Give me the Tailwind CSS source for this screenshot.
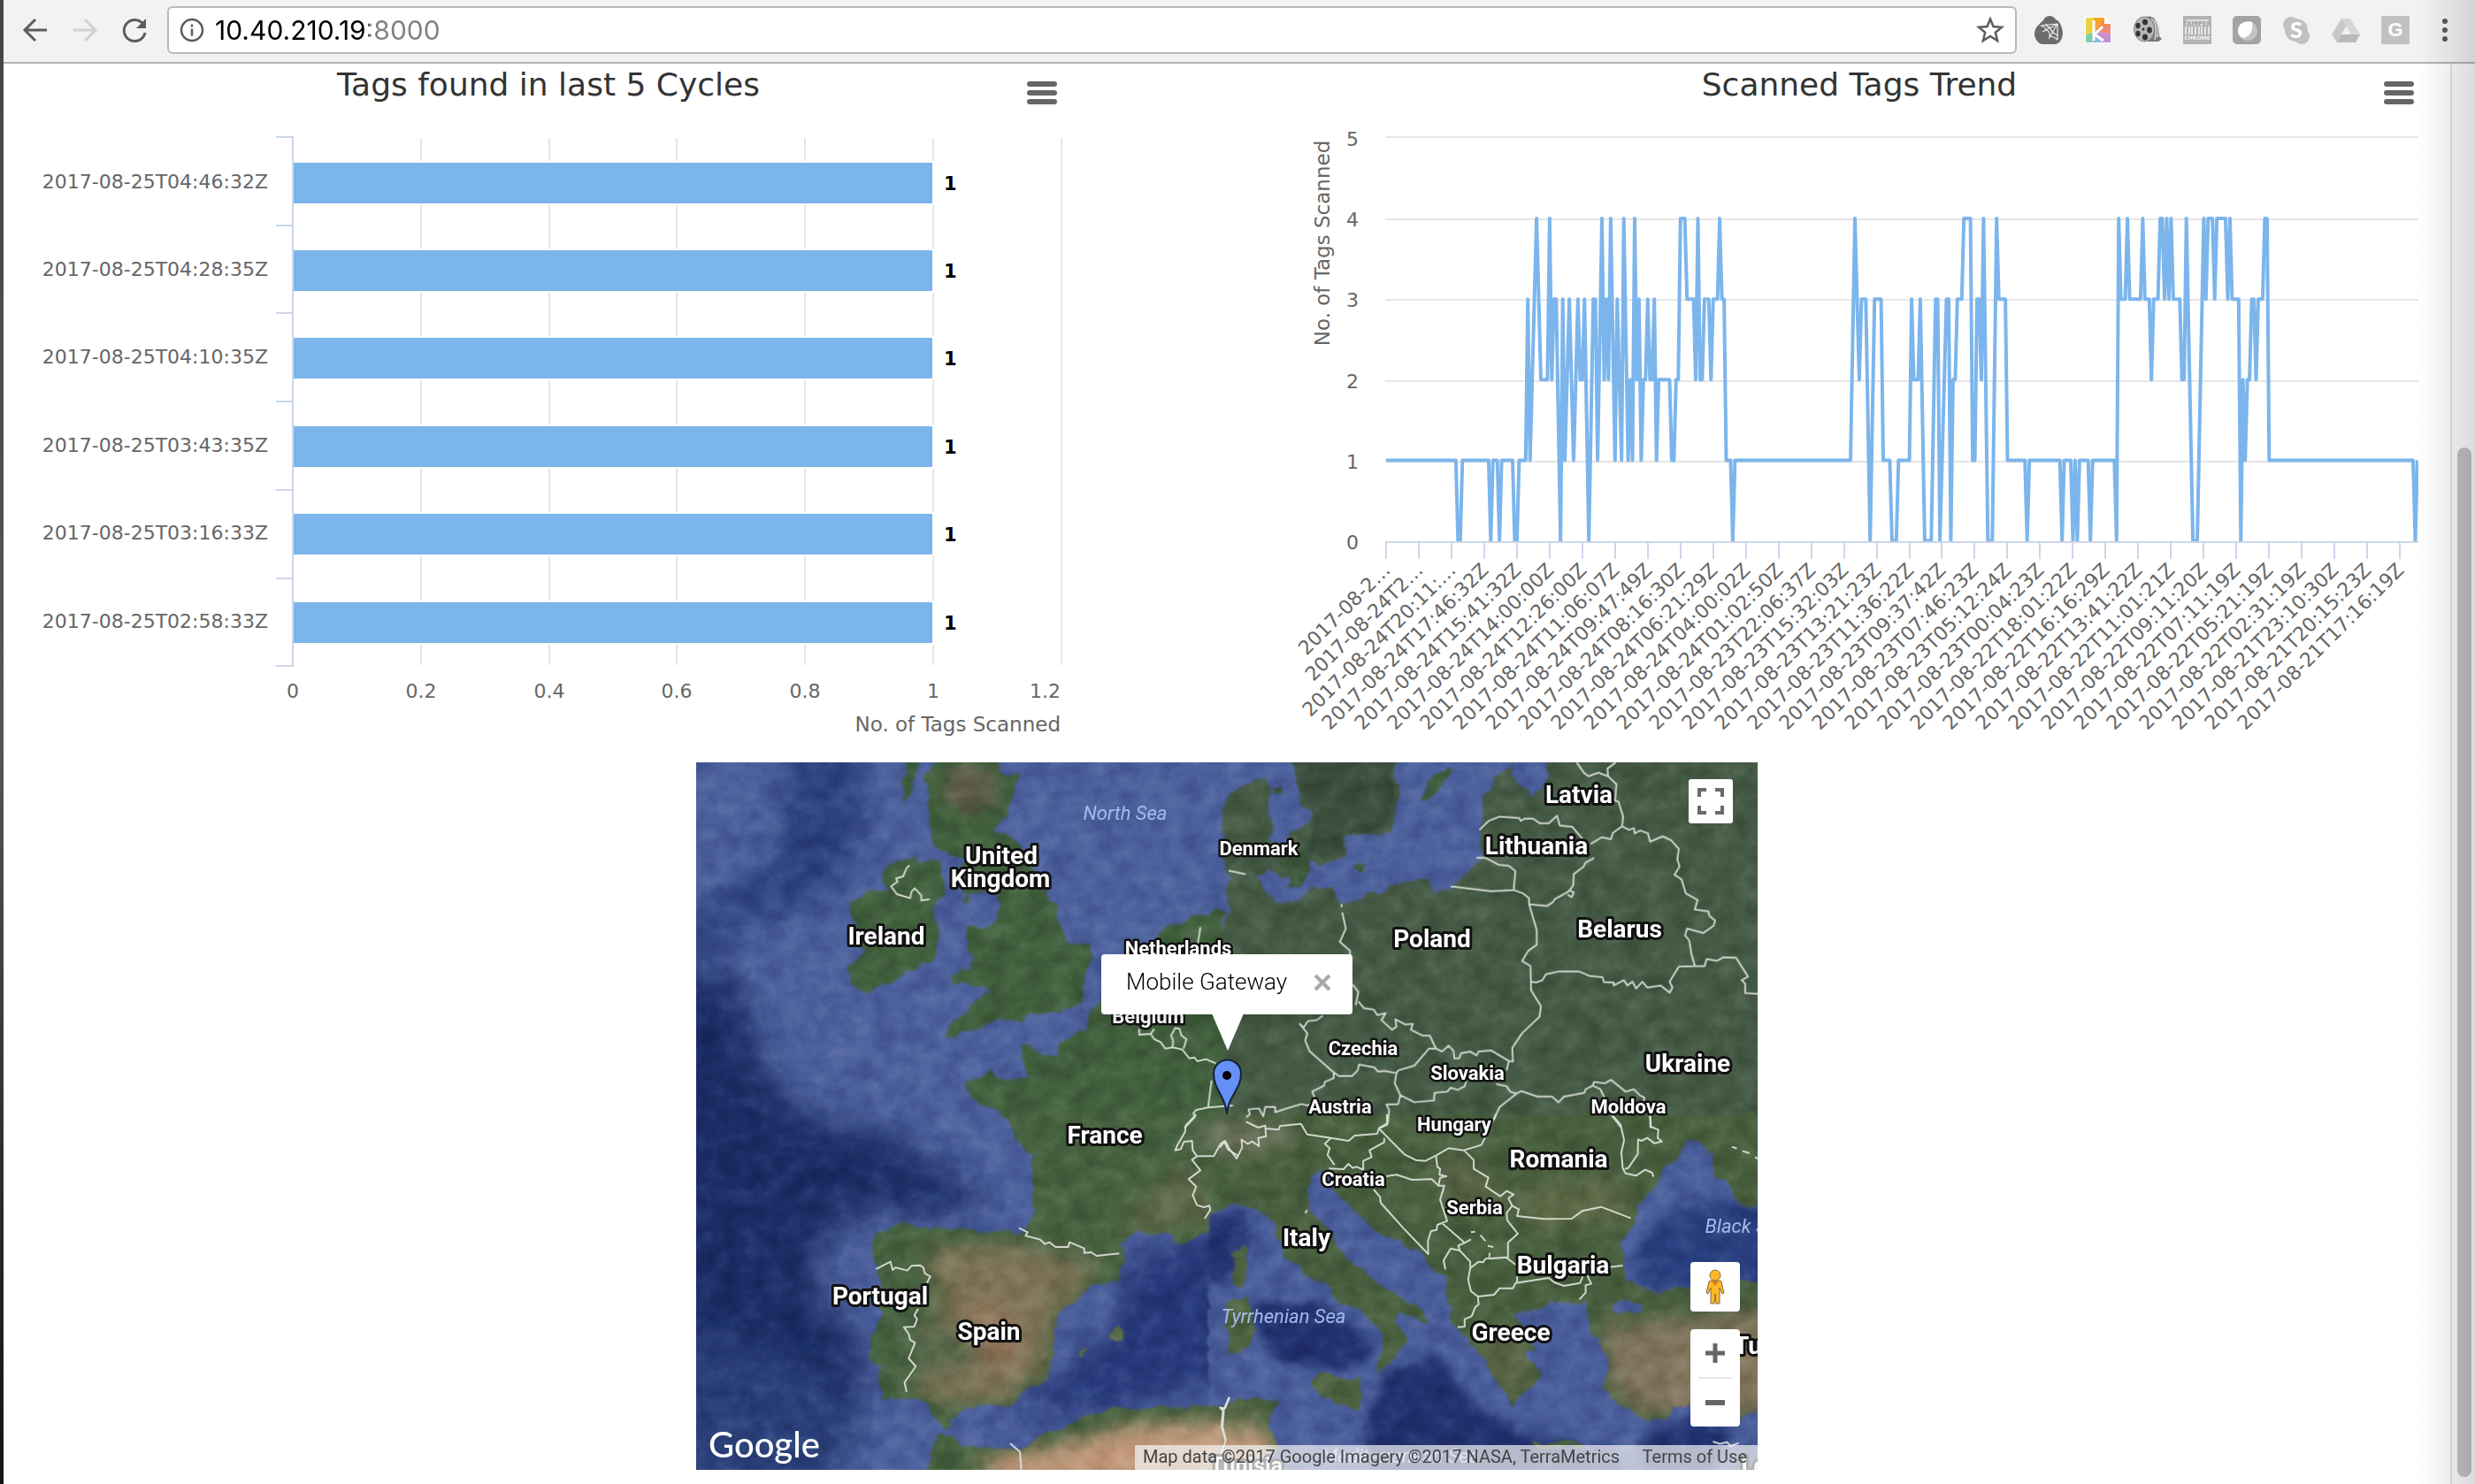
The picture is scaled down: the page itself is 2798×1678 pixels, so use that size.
<!DOCTYPE html>
<html lang="en">
<head>
<meta charset="utf-8">
<title>Tag Dashboard</title>
<script src="https://cdn.jsdelivr.net/npm/@tailwindcss/browser@4"></script>
</head>
<body class="h-screen overflow-hidden bg-white">
<div class="relative flex h-full">
  <div class="w-1 shrink-0 bg-linear-to-b from-[#4a4346] via-[#5b5355] to-[#181214]"></div>
  <div class="flex min-w-0 grow flex-col">

    <!-- Browser toolbar -->
    <header class="flex h-[72px] shrink-0 items-center border-b-2 border-[#b5b3b5] bg-[#f2f2f2] pr-7 pb-[2px] pl-5">
      <nav class="flex items-center gap-6">
        <button aria-label="Back" class="size-8"><svg viewBox="0 0 32 32" class="size-8" fill="none" stroke="#5c5c5c" stroke-width="3"><path d="M29 16H5M16 4L4 16l12 12"/></svg></button>
        <button aria-label="Forward" class="size-8"><svg viewBox="0 0 32 32" class="size-8" fill="none" stroke="#d2d2d2" stroke-width="3"><path d="M3 16h24M16 4l12 12-12 12"/></svg></button>
        <button aria-label="Reload" class="size-8"><svg viewBox="0 0 32 32" class="size-8"><path d="M26 9.500A12 12 0 1 0 28 19" fill="none" stroke="#5c5c5c" stroke-width="3"/><path d="M29 3v11H18z" fill="#5c5c5c"/></svg></button>
      </nav>
      <div class="ml-[21px] flex h-[54px] grow items-center rounded-[6px] border-2 border-[#b9b9b9] bg-white px-3">
        <svg viewBox="0 0 28 28" class="size-7 shrink-0" fill="none" stroke="#5c5c5c" stroke-width="2.500"><circle cx="14" cy="14" r="12"/><path d="M14 12.500v8M14 7.500v3"/></svg>
        <label for="url" class="sr-only">Address</label>
        <input id="url" value="10.40.210.19:8000" class="ml-3 h-10 grow bg-linear-to-r from-black from-[174px] to-[#808080] to-[174px] bg-clip-text font-['Inter',sans-serif] text-[30px] leading-10 text-transparent caret-black outline-none">
        <button aria-label="Bookmark" class="size-8"><svg viewBox="0 0 32 32" class="size-8" fill="none" stroke="#5c5c5c" stroke-width="2.500"><path d="M16 3.500l3.500 8.500 9.500.7-7.200 6 2.300 9.300-8.100-5-8.100 5 2.300-9.300-7.200-6 9.500-.7z"/></svg></button>
      </div>
      <div class="ml-5 flex shrink-0 items-center gap-6">
        <button aria-label="Spider web" class="size-8"><svg viewBox="0 0 32 32" class="size-8"><path d="M5 10C8 6 10 6 11 3c3-4 10-4 13 1 5 2 7 8 8 15 0 7-4 13-9 13H9C3 31 0 25 0 20c0-4 2-8 5-10z" fill="#6c6c6c"/><path d="M26 9L7 11m19-2L9 18m17-9L16 26m10-17v18M7 11q5 1 6 5 5 1 4 7 5 0 9 4M13 9q1 4 5 4 0 5 8 9" fill="none" stroke="#eee" stroke-width="1.200"/></svg></button>
        <button aria-label="Kami" class="size-8"><svg viewBox="0 0 32 32" class="size-8"><path d="M2 1h22l7 8v20l-2 2H3l-2-2V2z" fill="#fff"/><path d="M3 2h9v14L2 23V3z" fill="#ebd23c"/><path d="M11 2h12L12 17z" fill="#f5a623"/><path d="M23 2v7h7v3l-18 5z" fill="#f48a46"/><path d="M30 10v11l-18-4z" fill="#f28a78"/><path d="M12 17l18 4v9H20z" fill="#c78fd0"/><path d="M12 17l8 13H9z" fill="#8fb6e2"/><path d="M12 17L9 30H2v-8z" fill="#7ccfae"/><path d="M11 5v23M21 12l-9 9 10 7" fill="none" stroke="#fff" stroke-width="3"/></svg></button>
        <button aria-label="Film reel" class="size-8"><svg viewBox="0 0 32 32" class="size-8"><path d="M12 1c12-3 18 6 17 22l3 3-4 3H12z" fill="#777"/><path d="M20 3q8 6 4 24M24 4q6 8 3 20" fill="none" stroke="#ddd" stroke-width="1.500"/><ellipse cx="12" cy="15" rx="11.500" ry="14" fill="#b5b5b5" stroke="#888"/><g fill="#333"><ellipse cx="13" cy="7" rx="3" ry="3.200"/><ellipse cx="5" cy="11" rx="2.600" ry="3.200"/><ellipse cx="18" cy="16" rx="2.800" ry="3.600"/><ellipse cx="5" cy="20" rx="2.600" ry="3.200"/><ellipse cx="13" cy="24" rx="3" ry="3.400"/><circle cx="11" cy="15" r="1.500"/></g></svg></button>
        <button aria-label="Tamper Chrome" class="size-8"><svg viewBox="0 0 32 32" class="size-8"><path d="M0 0h32v32H0z" fill="#b3b3b3"/><path d="M2 11V6l2-2h24l2 2v5z" fill="#dedede"/><path d="M3 12v9M7 12v9M10 12v9M14 12v9M18 12v9M21 12v9M25 12v9M29 12v9" stroke="#e6e6e6" stroke-width="2"/><text x="16" y="10.500" font-size="7" text-anchor="middle" class="font-['DejaVu_Sans',sans-serif] font-bold" fill="#a0a0a0">TAMPER</text><text x="16" y="27" font-size="6" text-anchor="middle" class="font-['DejaVu_Sans',sans-serif] font-bold" fill="#f0f0f0">CHROME</text></svg></button>
        <button aria-label="Moon" class="size-8"><svg viewBox="0 0 32 32" class="size-8"><rect width="32" height="32" rx="5" fill="#a3a3a3"/><circle cx="17" cy="17" r="11" fill="#c4c4c4"/><path d="M6 19C5 9 13 5 22 7c2 9-3 17-10 18-3-1-5-3-6-6z" fill="#fff"/></svg></button>
        <button aria-label="Skype" class="size-8"><svg viewBox="0 0 32 32" class="size-8" fill="#c1c1c1"><circle cx="16" cy="16" r="13"/><circle cx="10" cy="10" r="9"/><circle cx="22" cy="23" r="9"/><text x="16" y="25" font-size="25" text-anchor="middle" class="font-['Lato',sans-serif] font-black" fill="#fff">S</text></svg></button>
        <button aria-label="Drive" class="size-8"><svg viewBox="0 0 32 32" class="size-8"><path d="M11 3h10L6 30 0 21z" fill="#c9c9c9"/><path d="M11 3h10l11 18H22z" fill="#d6d6d6"/><path d="M6 30l5-9h21l-5 9z" fill="#b9b9b9"/></svg></button>
        <button aria-label="G" class="size-8 bg-[#c1c1c1] text-center font-['Liberation_Sans',sans-serif] text-[22px] leading-8 font-bold text-white">G</button>
        <button aria-label="Menu" class="ml-[10px] h-8 w-3"><svg viewBox="0 0 12 32" class="h-8 w-3" fill="#5a5a5a"><circle cx="6" cy="6" r="3"/><circle cx="6" cy="16" r="3"/><circle cx="6" cy="26" r="3"/></svg></button>
      </div>
    </header>

    <div class="flex min-h-0 grow">
      <main class="min-w-0 grow overflow-hidden">
        <section class="flex h-[790px] justify-between px-4 font-['DejaVu_Sans',sans-serif]">
          <figure class="relative w-[1200px]">
            <h2 class="pt-[2px] pb-[2px] text-center text-[36px] leading-[44px] text-[#333]">Tags found in last 5 Cycles</h2>
            <button aria-label="Chart menu" class="absolute top-5 right-[25px] flex flex-col gap-1"><i class="h-[6px] w-[34px] rounded-full bg-[#666]"></i><i class="h-[6px] w-[34px] rounded-full bg-[#666]"></i><i class="h-[6px] w-[34px] rounded-full bg-[#666]"></i></button>
            <svg id="bars" viewBox="20 120 1200 742" class="w-full overflow-visible" role="img" aria-label="Tags found in last 5 cycles"></svg>
          </figure>
          <figure class="relative w-[1304px]">
            <h2 class="pt-[2px] pb-[2px] text-center text-[36px] leading-[44px] text-[#333]">Scanned Tags Trend</h2>
            <button aria-label="Chart menu" class="absolute top-5 right-[25px] flex flex-col gap-1"><i class="h-[6px] w-[34px] rounded-full bg-[#666]"></i><i class="h-[6px] w-[34px] rounded-full bg-[#666]"></i><i class="h-[6px] w-[34px] rounded-full bg-[#666]"></i></button>
            <svg id="trend" viewBox="1450 120 1304 742" class="w-full overflow-visible" role="img" aria-label="Scanned tags trend"></svg>
          </figure>
        </section>

        <!-- Map -->
        <section class="relative mx-auto h-[800px] w-[1200px] overflow-hidden font-['Roboto',sans-serif]" aria-label="Map">
          <svg viewBox="0 0 1200 800" class="absolute inset-0 size-full">
            <defs>
              <filter id="b20" x="-50%" y="-50%" width="200%" height="200%"><feGaussianBlur stdDeviation="18"/></filter>
              <filter id="b40" x="-50%" y="-50%" width="200%" height="200%"><feGaussianBlur stdDeviation="35"/></filter>
              <filter id="coast" filterUnits="userSpaceOnUse" x="-20" y="-20" width="1240" height="840" color-interpolation-filters="sRGB">
                <feTurbulence type="fractalNoise" baseFrequency=".05" numOctaves="4" seed="4" result="n"/>
                <feDisplacementMap in="SourceGraphic" in2="n" scale="14" xChannelSelector="R" yChannelSelector="G"/>
                <feGaussianBlur stdDeviation="1"/>
              </filter>
              <filter id="grain" filterUnits="userSpaceOnUse" x="0" y="0" width="1200" height="800" color-interpolation-filters="sRGB">
                <feTurbulence type="fractalNoise" baseFrequency=".04 .05" numOctaves="5" seed="9"/>
                <feColorMatrix values="1.600 0 0 0 -.34  1.600 0 0 0 -.34  1.600 0 0 0 -.34  0 0 0 0 1"/>
              </filter>
              <clipPath id="iberia"><path id="bl-land" d="M905 -30L915 0 935 60 970 120 980 230 965 370 945 385 870 370 750 370 620 350 585 350 530 385 515 420 525 480 540 560 535 650 510 760 505 800 535 840 540 940 620 945 660 955 690 1000 720 1040 740 1010 790 980 920 970 945 930 1010 870 1040 790 1035 700 1070 620 1140 570 1220 540 1235 480 1225 420 1270 375 1340 380 1400 415 1450 400 1500 340 1600 280V-30ZM650 1240L690 1120 705 1060 750 1070 770 1100 880 1110 960 1105 1020 1060 1110 1005 1250 975 1400 965 1450 975 1500 955 1600 955V1240Z"/></clipPath>
              <clipPath id="brsea"><path id="br-sea" d="M-40 330L0 295 40 285 110 310 150 370 180 460 240 530 330 600 400 650 450 700 460 770 440 870 500 800 530 740 490 690 510 650 590 700 580 650 500 590 410 520 350 470 320 400 250 300 240 230 250 180 300 165 320 190 310 220 350 270 400 340 480 400 560 440 600 500 640 530 645 620 660 690 720 770 760 830 790 900 830 970 860 930 910 870 870 790 900 780 860 700 835 650 900 640 950 620 1040 625 1050 700 1080 760 1100 850 1090 900 1130 960 1200 1010 1260 1020 1310 960 1370 980 1450 1030 1500 1000 1600 980V1230H175L140 1150 165 1100 130 1030 160 960 100 940 40 950-40 970ZM1330 70L1410 110 1400 180 1450 210 1470 280 1500 290 1600 265V560L1500 540 1330 570 1230 580 1150 540 1140 420 1180 350 1190 290 1240 220 1270 150ZM1110 630L1150 605 1210 620 1190 650 1130 655Z"/></clipPath>
              <clipPath id="mapbox"><rect width="1200" height="800"/></clipPath>
            </defs>
            <g clip-path="url(#mapbox)">
            <rect width="1200" height="800" fill="#4d619d"/>
            <!-- ocean depth -->
            <g filter="url(#b20)" fill="#1d2f66">
              <path d="M115 -30H185L190 80 150 150 60 180 -40 260 -40 210 30 150 90 110Z" fill="#2c417e"/>
              <path d="M-60 240L50 240 60 300 80 350 120 400 220 420 290 470 335 500 310 510 190 505 150 530 130 600 180 640 190 700 150 830H-60Z"/>
              <path d="M-60 650L60 660 140 690 190 740 150 830H-60Z" fill="#2a4079"/>
              <path d="M490 560L600 520 620 690 560 710 400 745 370 730 470 640Z" fill="#27397a"/>
              <path d="M300 745L420 720 520 700 500 730Z" fill="#27397a"/>
            </g>
            <g filter="url(#coast)">
              <g transform="translate(-5 0) scale(.3954 .3333) translate(0 -8)" fill="#42603e">
                <path d="M700 -20H870L880 45H940L925 100 895 190 865 245 900 250 940 300 1000 400 1045 520 1070 620 1140 615 1145 680 1110 770 1125 800 1100 835 1020 860 940 875 860 880 840 910 790 905 750 945 725 935 770 870 810 810 865 790 830 775 750 760 745 725 800 705 800 660 780 570 860 570 880 500 870 450 780 450 770 330 740 320 700 300 680 240 680 130 660 70Z"/>
                <path d="M610 -20H660L630 80 610 160ZM775 480l20-25 5 20-15 20z"/>
                <path d="M560 350L630 335 700 345 725 400 720 460 690 500 700 580 690 690 620 710 560 760 500 790 455 760 440 710 470 680 500 640 460 600 465 540 460 480 490 450 560 450 540 410Z"/>
                <path d="M1640 60L1568 90 1530 120 1515 200 1520 330 1535 400 1530 520 1500 515 1420 540 1350 570 1320 620 1270 680 1200 780 1140 850 1130 920 1050 960 1045 1010 1010 1010 960 970 935 975 960 1080 900 1085 860 1060 775 1090 790 1140 860 1180 910 1230 930 1290H1640Z"/>
                <path d="M730 20L860 30 870 140 780 190 720 130Z" fill="#5f5f4a" filter="url(#b20)"/>
              </g>
              <g transform="translate(595 0) scale(.3954 .3333) translate(0 -8)">
                <path d="M0 -20H1600V1300H0Z" fill="#465b45"/>
                <path d="M0 -20H185L215 100 230 160 260 190 240 220 200 250 160 285 120 270 145 230 130 180 145 110 130 50 60 90 20 120 0 160ZM500 -20H830L830 25 780 60 740 130 735 210 740 330 700 380 670 410 660 450 610 450 590 400 520 410 440 450 340 490 310 430 260 430 220 480 170 490 130 460 100 400 130 380 180 400 240 340 290 350 350 335 360 260 400 245 450 265 490 220 500 100ZM830 -20H930L925 100 890 130 865 90 835 55ZM0 330L15 400 20 520 0 560Z" fill="#4d619d"/>
                <path d="M600 60L650 20 660 30 620 100 575 150 570 120ZM370 360l15-20 18 20-12 24zM180 340L240 310 255 370 230 430 190 430ZM150 95h20v20h-20z" fill="#3f5a3c"/>
                <path d="M185 -20H495L485 130 470 220 440 250 380 240 350 265 345 325 290 338 250 310 245 270 265 200 225 120Z" fill="#3c4f3e"/>
              </g>
              <g transform="translate(-5 405) scale(.3954 .3333)">
                <use href="#bl-land" fill="#466240"/>
                <path d="M1185 730l30-35 25 15-10 35-25 10zM1110 790l20-18 10 14-15 14z" fill="#5a6c4a"/>
                <g clip-path="url(#iberia)">
                  <g filter="url(#b40)">
                    <path d="M660 430L940 420 1180 500 1060 620 1000 850 900 960 700 960 640 900 640 720 720 640Z" fill="#7f7459"/>
                    <path d="M800 600L900 640 950 800 820 860Z" fill="#94765c"/>
                    <path d="M640 720L760 690 850 830 640 870Z" fill="#59694b"/>
                    <path d="M1380 160H1450L1490 350 1200 380Z" fill="#62694b"/>
                    <path d="M840 1140L1060 1100 1250 1030 1640 1030V1240H840Z" fill="#c29a7c"/>
                  </g>
                </g>
              </g>
              <g transform="translate(595 405) scale(.3954 .3333)">
                <path d="M0 -20H1600V1240H0Z" fill="#49603f"/>
                <g filter="url(#b40)">
                  <path d="M-60 20H200L220 50 60 100-60 90Z" fill="#7b7a66"/>
                  <path d="M620 130L700 120 800 250 700 300 620 260Z" fill="#5b6547"/>
                  <path d="M850 240L1150 200 1150 340 860 350Z" fill="#626b48"/>
                  <path d="M1080 700L1640 640V1000H1200L1110 900Z" fill="#83765e"/>
                  <path d="M760 700L860 780 860 950 780 880Z" fill="#66694c"/>
                  <path d="M-60 1040L130 1040 190 1240H-60Z" fill="#c4a182"/>
                </g>
                <use href="#br-sea" fill="#4a5e9b"/>
                <g clip-path="url(#brsea)"><g filter="url(#b20)" fill="#22336f">
                  <path d="M80 620L260 610 400 720 430 800 350 850 180 820 100 740Z"/>
                  <path d="M460 860L620 800 720 960 860 1060 1100 1120 1200 1240H430L410 1000Z"/>
                  <path d="M1200 1080L1330 1000 1460 1060 1400 1200H1180Z"/>
                  <path d="M-60 330L60 310 80 400 0 560-60 560Z"/>
                  <path d="M1270 330L1400 260 1620 320V560L1200 560 1170 440Z" fill="#2c4080"/>
                </g></g>
                <path d="M25 470L65 420 75 480 60 570 35 560ZM15 620L70 590 85 700 60 790 20 790 10 700ZM250 880L290 865 395 880 405 940 390 985 330 960 260 910ZM880 1090L1030 1095 1035 1112 900 1112Z" fill="#4f6440"/>
              </g>
            </g>
            <rect width="1200" height="800" filter="url(#grain)" opacity=".22" class="mix-blend-soft-light"/>

            <!-- borders -->
            <g fill="none" stroke="#dfe3dc" stroke-opacity=".9" stroke-width="2" stroke-linejoin="round">
              <g transform="translate(-8 -7) scale(.3954 .3333)">
                <path vector-effect="non-scaling-stroke" d="M630 370L622 380 612 408 592 415 596 425 578 442 594 468 632 482 636 460 645 448 664 472 664 490 688 485M1462 580L1454 640M1287 925L1287 945 1320 942 1330 925M1320 942L1330 960 1348 970 1362 992 1382 988 1410 995 1430 1025 1445 1022 1453 1035 1478 1028 1506 1042M1382 988L1384 965 1378 948 1390 922 1402 925 1408 948 1422 960 1414 992M1494 1100L1484 1192 1450 1200 1442 1212 1446 1224 1416 1262M1484 1192L1555 1185"/>
              </g>
              <g transform="translate(592 -7) scale(.3954 .3333)">
                <path vector-effect="non-scaling-stroke" d="M25 388L74 400M348 502v10M350 530L360 585 343 630 372 660 372 685M380 775L396 800 388 845M396 832L412 855 440 860 450 878 474 872 462 895 492 928 505 918 502 893 530 910 552 908 546 928 580 948 600 948 618 992 598 992 556 1050 510 1066 505 1075 470 1068 452 1070 442 1056 398 1046 394 1066 378 1085 340 1085 325 1072 256 1000 244 965 250 940 228 908 240 920 252 898 276 896 295 880M325 1072L326 1092 300 1105 298 1118 264 1138 275 1172 250 1185 234 1180 194 1194 158 1208 158 1190 130 1190 124 1222 112 1195 82 1198 86 1215 75 1225M618 992L635 1002 654 982 668 1000 670 1025 684 1025 690 1008 716 1002 734 1015 740 1002 775 998 826 1034 820 1066M505 1075L500 1110 516 1150 510 1180 476 1182 484 1200 480 1245 455 1262M516 1150L556 1174 612 1168 614 1142 650 1138 660 1125 680 1132 700 1120 705 1100M660 442L776 458 840 454 868 466 884 482 884 502 906 590 906 640 882 660 864 695 888 712 890 795 918 848 914 884 864 940 836 990 838 1036 826 1034M742 250L768 220 800 205 856 210 860 220 872 212 896 212 915 228 940 228 964 202 972 235 1008 240 1040 285M734 345H760L796 368 826 372 845 390 840 454M1020 21L1042 58 1054 68 1082 56 1110 68 1108 42 1132 21M1110 68L1134 95 1130 150 1140 155 1153 205 1150 238 1124 260 1118 282 1092 275 1060 298M1070 345L1045 362 1040 375 1012 400 1010 440 996 460 958 485 952 495 936 508 884 502M1000 455L1012 462 1006 478 994 470M1150 238L1170 250 1184 244 1186 262 1202 252 1224 262 1230 290 1266 272 1290 285 1312 314 1308 350 1314 375 1300 402 1320 418 1332 465 1366 488 1358 520 1396 526 1400 542 1416 558 1412 575 1382 600 1336 585 1330 608 1342 625 1348 670 1358 712 1312 714 1286 765 1294 785 1286 802 1260 778 1222 785 1208 765 1190 788 1180 765 1165 778 1155 760 1126 778 1126 768 1098 766 1094 750 1056 745 1026 730 970 730 932 740 922 760 904 768 890 765M1358 712H1386L1392 688 1422 694 1440 682 1476 684 1510 748 1492 760 1502 772V804L1540 806M790 1112L820 1120 830 1138 848 1145 862 1136 908 1155 950 1155 968 1174 984 1155 1042 1142 1046 1130 1066 1118 1070 1105 1100 1110 1118 1098 1160 1138 1184 1130 1200 1150 1214 1158 1212 1170M848 1145L800 1190 780 1240M1066 1118L1088 1130 1100 1160M1120 1218L1146 1258M1230 1218L1232 1262"/>
              </g>
              <g transform="translate(-8 398) scale(.3954 .3333)">
                <path vector-effect="non-scaling-stroke" d="M1450 0L1420 38 1418 60 1396 105 1390 122 1406 118 1414 94 1438 90 1440 122 1452 142 1500 142 1520 100 1530 92 1540 118 1568 140M1452 142L1438 154 1462 190 1428 220 1450 245 1440 275 1452 308 1472 315 1488 310 1490 325 1474 354M943 385L968 400 962 412 1004 425 1018 440 1030 434 1048 450 1084 450 1088 434 1130 455 1130 470 1150 468 1165 480 1230 472M535 525L576 500 582 528 590 520 624 530 636 514 660 512 670 520 674 540 690 550 680 572M655 660L644 682 652 695 644 720 614 722 628 745 632 765 646 775 628 828 648 855 616 910 622 942M918 1116L946 1145 950 1206M1544 960L1530 998 1518 995 1526 1005 1522 1060 1534 1108 1522 1150"/>
              </g>
              <g transform="translate(592 398) scale(.3954 .3333)">
                <path vector-effect="non-scaling-stroke" d="M75 25L110 45 130 38 132 75 110 80 112 108 92 92 80 100 62 86 64 112 48 150 28 118 15 90 0 112M130 48L168 52 172 40 232 32 250 68 318 80 368 90 386 72 450 66 455 48 478 35V0M318 80L300 100 314 115 308 138 328 172M312 184L354 186 368 168 380 182 392 178 410 188 410 158 434 145 428 122 470 95 470 80M455 48L486 86 528 136 560 155 588 158 618 140 654 115 698 122 748 104 790 0M618 140L622 178 630 185 628 205 648 210 630 215 625 242M476 210L505 205 550 222 606 220 625 242 642 242 630 290 650 362 622 375 620 392 604 396 595 430 596 474 524 385 460 300 458 280 440 255M698 122L726 155 726 185 768 215 760 245 802 278 820 260 840 272 825 285 836 310 820 335 822 360 852 405 824 435V485L772 490M836 310L855 322 850 345 926 355 1006 354 1036 328 1090 314 1175 352M636 370L700 436 682 445 686 462 716 500 716 522 710 560 718 600 738 618 784 612 800 590 838 590 846 572 940 555 956 570 984 582 1030 572 1038 550M716 522L740 500 752 502 760 490 818 485 846 510M686 462L660 455 640 495 645 526M738 618L740 645 730 655 720 685 700 695 700 720 680 722M850 550V572M1050 545L1062 575 1046 580 1046 605 1028 628M1115 518L1152 513M1120 0L1146 35 1156 88 1148 130 1152 182 1160 200 1190 208 1216 188 1236 198 1240 212M1230 0L1232 42 1254 52 1252 80 1264 92 1242 98 1222 80 1206 90 1196 85 1195 135 1168 182 1158 185M700 436L718 424M718 400L730 398M745 410L760 430M766 446L782 450M772 470L770 485M244 335L250 325M1464 110L1478 116M1494 124L1514 132M1530 145L1540 152M28 960L15 998 2 995 12 1005 8 1060 18 1108M1410 1110L1430 1118 1450 1112 1460 1125 1484 1115"/>
              </g>
            </g>

            <!-- labels -->
            <g text-anchor="middle" fill="#fff" stroke="#111" stroke-width="6" stroke-linejoin="round" class="font-bold [paint-order:stroke]">
              <g font-size="28">
                <text x="345" y="115">United</text><text x="344" y="141">Kingdom</text><text x="215" y="206">Ireland</text><text x="998" y="46">Latvia</text><text x="950" y="104">Lithuania</text><text x="832" y="209">Poland</text><text x="1044" y="198">Belarus</text><text x="1121" y="350">Ukraine</text><text x="975" y="458">Romania</text><text x="690" y="547">Italy</text><text x="980" y="578">Bulgaria</text><text x="921" y="654">Greece</text><text x="462" y="431">France</text><text x="208" y="613">Portugal</text><text x="331" y="653">Spain</text><text x="622" y="804" font-size="25">Tunisia</text><text x="1216" y="669">Turkey</text><text x="1230" y="804" font-size="25">Lebanon</text>
              </g>
              <g font-size="22" stroke-width="5">
                <text x="636" y="105">Denmark</text><text x="545" y="218">Netherlands</text><text x="511" y="295">Belgium</text><text x="754" y="331">Czechia</text><text x="872" y="359">Slovakia</text><text x="728" y="397">Austria</text><text x="1054" y="397">Moldova</text><text x="857" y="417">Hungary</text><text x="743" y="479">Croatia</text><text x="880" y="511">Serbia</text>
              </g>
            </g>
            <g text-anchor="middle" fill="#a3bbea" font-size="22" class="italic">
              <text x="485" y="65">North Sea</text><text x="664" y="634">Tyrrhenian Sea</text><text x="1187" y="532">Black Sea</text><text x="796" y="792">Mediterranean Sea</text>
            </g>
            <!-- marker -->
            <path d="M600 398C599 378 585 370 585 352a15.500 15.500 0 0 1 31 0C616 370 601 378 600 398z" fill="#6590f8" stroke="#15203a" stroke-width="2"/>
            <circle cx="600" cy="354" r="5" fill="#000"/>
            </g>
          </svg>

          <div class="absolute top-[217px] left-[458px] flex h-[68px] w-[284px] items-center justify-between rounded-[4px] bg-white pl-7 pr-6 shadow-lg">
            <p class="pb-[6px] text-[26px] leading-8 font-light text-black">Mobile Gateway</p>
            <button aria-label="Close" class="mb-1 size-5"><svg viewBox="0 0 20 20" class="size-5" stroke="#a8a8a8" stroke-width="4"><path d="M2 2l16 16M18 2L2 18"/></svg></button>
            <svg viewBox="0 0 36 42" class="absolute top-[67px] left-[125px] h-[42px] w-9" fill="#fff"><path d="M0 0h36L18 42z"/></svg>
          </div>

          <button aria-label="Full screen" class="absolute top-[19px] right-7 flex size-[50px] items-center justify-center rounded-[3px] bg-white"><svg viewBox="0 0 30 30" class="size-[30px]" fill="none" stroke="#6a6a6a" stroke-width="4"><path d="M2 10V2h8M20 2h8v8M28 20v8h-8M10 28H2v-8"/></svg></button>

          <div class="absolute top-[565px] right-5 flex w-14 flex-col gap-5">
            <button aria-label="Street View" class="flex size-14 items-center justify-center rounded-[4px] bg-white"><svg viewBox="0 0 22 40" class="h-10 w-[22px]" fill="#fbb829" stroke="#8a6b3a" stroke-width="1"><path d="M6 13h10l2 1 3 13-2 1-3-7v18h-4l-1-11-1 11H6V21l-3 7-2-1 3-13z"/><path d="M7 14h8l-4 5z" fill="#e0801e" stroke="none"/><circle cx="11" cy="7" r="6"/></svg></button>
            <div class="flex h-[110px] flex-col items-center rounded-[4px] bg-white">
              <button aria-label="Zoom in" class="flex w-14 grow items-center justify-center"><svg viewBox="0 0 22 22" class="size-[22px]" stroke="#666" stroke-width="5"><path d="M0 11h22M11 0v22"/></svg></button>
              <div class="h-[2px] w-[38px] bg-[#e6e6e6]"></div>
              <button aria-label="Zoom out" class="flex w-14 grow items-center justify-center"><svg viewBox="0 0 22 22" class="size-[22px]" stroke="#666" stroke-width="6"><path d="M0 11h22"/></svg></button>
            </div>
          </div>

          <a href="#" class="absolute bottom-0 left-[14px] font-['Lato',sans-serif] text-[40px] leading-[58px] font-medium text-white">Google</a>
          <footer class="absolute right-0 bottom-0 flex h-7 w-[704px] items-center justify-between bg-[#f5f5f5]/70 pr-3 pb-[2px] pl-[9px] text-[20px] leading-6 text-[#444]">
            <span>Map data ©2017 Google Imagery ©2017 NASA, TerraMetrics</span><a href="#">Terms of Use</a>
          </footer>
        </section>
      </main>
      <!-- page scrollbar -->
      <div class="w-7 shrink-0 border-l-2 border-[#e3e3e3] bg-[#fafafa] pt-[434px] pl-[6px]"><div class="h-[1164px] w-4 rounded-full bg-[#c1c1c1]"></div></div>
    </div>
  </div>
  <div class="pointer-events-none absolute inset-y-0 right-0 w-16 bg-linear-to-r from-black/0 to-black/12"></div>
</div>

<script>
const bars = [['2017-08-25T04:46:32Z', 1], ['2017-08-25T04:28:35Z', 1], ['2017-08-25T04:10:35Z', 1], ['2017-08-25T03:43:35Z', 1], ['2017-08-25T03:16:33Z', 1], ['2017-08-25T02:58:33Z', 1]];
const barLeft = 331, barUnit = 724, barTop = 155, rowH = 99.4;
let s = '';
['0', '0.2', '0.4', '0.6', '0.8', '1', '1.2'].forEach((t, i) => {
  const x = Math.round(barLeft + i * barUnit / 5);
  if (i) s += `<path d="M${x} 156V752" stroke="#e6e6e6" stroke-width="2"/>`;
  s += `<text x="${i === 6 ? x - 1 : x}" y="789" font-size="22" fill="#666" text-anchor="${i === 6 ? 'end' : 'middle'}">${t}</text>`;
});
bars.forEach(([label, v], i) => {
  const y = Math.floor(barTop + i * rowH);
  s += `<rect x="${barLeft}" y="${y + 28}" width="${v * barUnit}" height="48" fill="#7cb5ec" stroke="#fff" stroke-width="2"/>`;
  s += `<text x="303" y="${y + 58}" font-size="22" fill="#666" text-anchor="end">${label}</text>`;
  s += `<text x="${barLeft + v * barUnit + 12}" y="${y + 60}" font-size="21" font-weight="bold">${v}</text>`;
});
for (let i = 0; i <= 6; i++) s += `<path d="M312 ${Math.round(barTop + i * 99.7)}h19" stroke="#ccd6eb" stroke-width="2"/>`;
s += '<path d="M331 154V754" stroke="#ccd6eb" stroke-width="2"/><text x="1199" y="827" font-size="23" fill="#666" text-anchor="end">No. of Tags Scanned</text>';
document.getElementById('bars').innerHTML = s;

const times = ['2017-08-2…', '2017-08-24T2…', '2017-08-24T20:11:…', '2017-08-24T17:46:32Z', '2017-08-24T15:41:32Z', '2017-08-24T14:00:00Z', '2017-08-24T12:26:00Z', '2017-08-24T11:06:07Z', '2017-08-24T09:47:49Z', '2017-08-24T08:16:30Z', '2017-08-24T06:21:29Z', '2017-08-24T04:00:02Z', '2017-08-24T01:02:50Z', '2017-08-23T22:06:37Z', '2017-08-23T15:32:03Z', '2017-08-23T13:21:23Z', '2017-08-23T11:36:22Z', '2017-08-23T09:37:42Z', '2017-08-23T07:46:23Z', '2017-08-23T05:12:24Z', '2017-08-23T00:04:23Z', '2017-08-22T18:01:22Z', '2017-08-22T16:16:29Z', '2017-08-22T13:41:22Z', '2017-08-22T11:01:21Z', '2017-08-22T09:11:20Z', '2017-08-22T07:11:19Z', '2017-08-22T05:21:19Z', '2017-08-22T02:31:19Z', '2017-08-21T23:10:30Z', '2017-08-21T20:15:23Z', '2017-08-21T17:16:19Z'];
// scan index:tag count, at each change of slope
const scans = '0:1 32:1 33:0 34:0 35:1 47:1 48:0 49:1 51:1 52:0 53:1 58:1 59:0 60:0 61:1 64:1 65:3 66:1 69:4 71:2 74:2 75:4 76:2 77:3 78:3 80:0 81:3 82:1 84:3 86:1 88:3 89:2 90:2 91:3 93:0 95:3 96:3 97:1 99:4 100:2 101:3 102:2 103:4 105:1 106:3 108:1 109:4 111:1 112:2 113:1 114:4 115:2 116:3 117:1 118:2 119:2 120:3 121:2 122:2 123:3 124:1 125:2 130:2 131:1 132:1 133:2 134:2 135:4 137:4 138:3 141:3 142:2 143:4 144:2 145:2 146:3 148:3 149:2 150:3 152:3 153:4 154:3 155:3 156:1 158:1 159:0 160:1 213:1 215:4 217:2 218:3 220:3 222:0 224:3 227:3 228:1 231:1 232:0 234:0 235:1 240:1 241:3 242:2 244:2 245:3 247:0 250:0 252:3 253:3 254:0 257:3 258:3 259:0 260:2 261:2 262:3 264:3 265:4 268:4 269:1 270:1 271:3 272:3 273:2 274:4 276:0 278:0 280:4 281:3 284:3 285:1 293:1 294:0 295:1 309:1 310:0 311:1 314:1 315:0 316:1 317:0 318:1 322:1 323:0 324:1 334:1 335:0 336:4 337:3 339:3 340:4 341:3 346:3 347:4 348:3 350:3 351:2 352:3 354:3 355:4 356:4 357:3 358:4 359:3 360:4 361:3 364:3 365:2 366:2 367:4 370:0 372:0 375:4 376:3 377:4 379:4 380:3 381:4 385:4 386:3 387:4 388:3 391:3 392:0 393:2 394:1 395:2 396:2 397:3 398:3 399:2 400:3 402:3 403:4 404:4 405:1 471:1 472:0 473:1';
let t = '';
for (let v = 0; v <= 5; v++) {
  const y = Math.round(612 - v * 91.2);
  if (v) t += `<path d="M1566 ${v === 5 ? 155 : y + 1}H2734" stroke="#e6e6e6" stroke-width="2"/>`;
  t += `<text x="1536" y="${y + 9}" font-size="22" fill="#666" text-anchor="end">${v}</text>`;
}
t += '<path d="M1566 613H2734" stroke="#ccd6eb" stroke-width="2"/>';
times.forEach((label, i) => {
  const x = Math.round(1567 + i * 36.97);
  t += `<path d="M${x} 614V632" stroke="#ccd6eb" stroke-width="2"/><text transform="translate(${x + 6} 646) rotate(-45)" font-size="22" fill="#666" text-anchor="end">${label}</text>`;
});
const pts = scans.split(' ').map(p => { const [i, v] = p.split(':'); return `${(1567 + i * 2.465).toFixed(1)},${(611.5 - v * 91.1).toFixed(1)}`; }).join(' ');
t += `<clipPath id="plot"><rect x="1566" y="150" width="1168" height="462"/></clipPath><polyline points="${pts}" clip-path="url(#plot)" fill="none" stroke="#7cb5ec" stroke-width="4" stroke-linejoin="round"/>`;
t += '<text transform="translate(1503 275) rotate(-90)" font-size="23" fill="#666" text-anchor="middle">No. of Tags Scanned</text>';
document.getElementById('trend').innerHTML = t;
</script>
</body>
</html>
